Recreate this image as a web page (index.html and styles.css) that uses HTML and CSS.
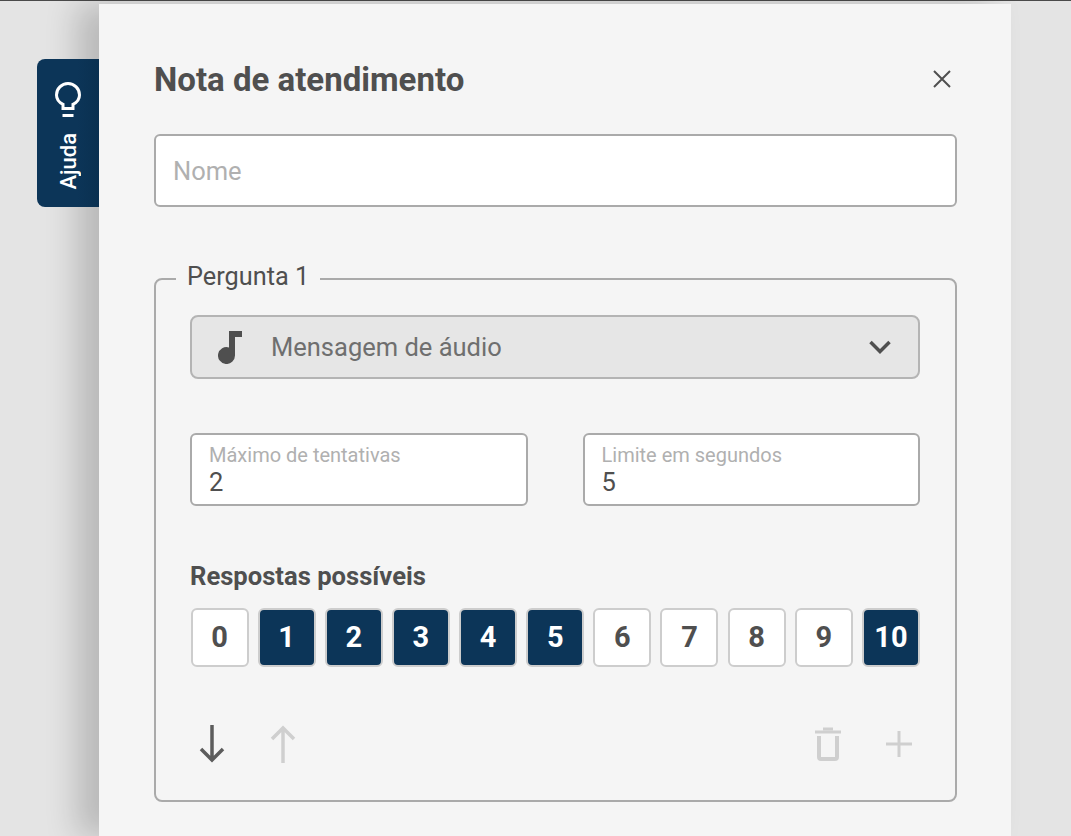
FILE: index.html
```html
<!DOCTYPE html>
<html lang="pt-BR">
<head>
  <meta charset="UTF-8" />
  <title>Nota de atendimento</title>
  <link rel="stylesheet" href="styles.css">
</head>
<body>
  <div class="top-line"></div>
  <div class="panel">
    <div class="help-tab">
      <svg width="28" height="36" viewBox="0 0 28 36" fill="none" stroke="#fff" stroke-width="3">
        <path d="M9 27.5v-4.2C5 21.300 2.500 17.800 2.500 14a11.500 11.500 0 0 1 23 0c0 3.800-2.500 7.300-6.500 9.300v4.200z"/>
        <path d="M8.500 34.500h11"/>
      </svg>
      <span class="help-text">Ajuda</span>
    </div>

    <div class="panel-header">
      <h1>Nota de atendimento</h1>
      <svg class="close-icon" width="18" height="18" viewBox="0 0 18 18" stroke="#4f4f4f" stroke-width="2">
        <path d="M1 1l16 16M17 1L1 17"/>
      </svg>
    </div>

    <div class="name-input">Nome</div>

    <fieldset class="question">
      <legend>Pergunta 1</legend>

      <div class="select-box">
        <svg width="24" height="33" viewBox="0 0 24 33" fill="#4f4f4f">
          <path d="M11 0H24V6H17V24.500A8.500 8.500 0 1 1 11 16.400z"/>
        </svg>
        <span class="select-text">Mensagem de áudio</span>
        <svg width="22" height="14" viewBox="0 0 22 14" fill="none" stroke="#4f4f4f" stroke-width="3.500">
          <path d="M1.500 2l9.500 9.500L20.500 2"/>
        </svg>
      </div>

      <div class="fields">
        <div class="field">
          <label>Máximo de tentativas</label>
          <div class="value">2</div>
        </div>
        <div class="field">
          <label>Limite em segundos</label>
          <div class="value">5</div>
        </div>
      </div>

      <h3>Respostas possíveis</h3>
      <div class="answers">
        <div class="answer">0</div>
        <div class="answer on">1</div>
        <div class="answer on">2</div>
        <div class="answer on">3</div>
        <div class="answer on">4</div>
        <div class="answer on">5</div>
        <div class="answer">6</div>
        <div class="answer">7</div>
        <div class="answer">8</div>
        <div class="answer">9</div>
        <div class="answer on">10</div>
      </div>

      <div class="actions">
        <div class="action-group">
          <svg width="26" height="38" viewBox="0 0 26 38" fill="none" stroke="#5c5c5c" stroke-width="3.500">
            <path d="M13 0v35M2 24l11 11 11-11"/>
          </svg>
          <svg width="26" height="38" viewBox="0 0 26 38" fill="none" stroke="#cfcfcf" stroke-width="3.500">
            <path d="M13 38V3M2 14L13 3l11 11"/>
          </svg>
        </div>
        <div class="action-group">
          <svg width="26" height="34" viewBox="0 0 26 34" fill="none" stroke="#cfcfcf" stroke-width="4">
            <path d="M0 5h26" stroke-width="3"/>
            <path d="M8 2h10" stroke-width="3"/>
            <path d="M4 9v21a2 2 0 0 0 2 2h14a2 2 0 0 0 2-2V9"/>
          </svg>
          <svg width="26" height="26" viewBox="0 0 26 26" fill="none" stroke="#cfcfcf" stroke-width="3">
            <path d="M13 0v26M0 13h26"/>
          </svg>
        </div>
      </div>
    </fieldset>
  </div>
</body>
</html>
```

FILE: styles.css
```css
html, body { margin: 0; height: 836px; overflow: hidden; }
body { font-family: Roboto, "Liberation Sans", sans-serif; background: #e4e4e4; color: #4f4f4f; }
.top-line { height: 1px; background: #4a4a4a; margin-bottom: 3px; }

.panel {
  position: relative;
  box-sizing: border-box;
  width: 912px;
  height: 832px;
  margin-left: 99px;
  padding: 0 54px 0 55px;
  background: #f5f5f5;
  box-shadow: -22px 0 30px rgba(0, 0, 0, 0.19);
}

.help-tab {
  position: absolute;
  left: -62px;
  top: 55px;
  box-sizing: border-box;
  width: 62px;
  height: 148px;
  padding-top: 22px;
  display: flex;
  flex-direction: column;
  align-items: center;
  background: linear-gradient(to right, #0c3558 65%, #0a3050);
  border-radius: 8px 0 0 8px;
}
.help-text {
  margin-top: 16px;
  writing-mode: vertical-rl;
  transform: rotate(180deg);
  color: #fff;
  font-size: 22px;
  font-weight: 500;
}

.panel-header {
  box-sizing: border-box;
  display: flex;
  justify-content: space-between;
  align-items: flex-start;
  height: 130px;
  padding: 56px 6px 0 0;
}
.panel-header h1 { margin: 0; font-size: 33px; line-height: 40px; font-weight: 700; color: #4f4f4f; }
.close-icon { margin-top: 10px; }

.name-input {
  box-sizing: border-box;
  height: 73px;
  padding-left: 17px;
  line-height: 71px;
  font-size: 25.5px;
  color: #b0b0b0;
  background: #fff;
  border: 2px solid #aaa;
  border-radius: 6px;
}

.question {
  box-sizing: border-box;
  height: 539px;
  margin: 56px 0 0;
  padding: 20px 35px 0 34px;
  border: 2px solid #aaa;
  border-radius: 8px;
}
.question legend {
  margin-left: -14px;
  padding: 0 11px 4px;
  font-size: 25.3px;
  line-height: 28px;
}

.select-box {
  box-sizing: border-box;
  display: flex;
  align-items: center;
  height: 64px;
  padding: 0 27px 0 26px;
  background: #e6e6e6;
  border: 2px solid #b4b4b4;
  border-radius: 8px;
}
.select-text { flex: 1; margin-left: 29px; font-size: 25.5px; color: #6f6f6f; }

.fields { display: flex; justify-content: space-between; margin-top: 54px; }
.field {
  box-sizing: border-box;
  width: 337.5px;
  height: 73px;
  padding: 9px 17px 0;
  background: #fff;
  border: 2px solid #aaa;
  border-radius: 6px;
}
.field label { display: block; font-size: 20px; line-height: 22px; color: #b0b0b0; }
.field .value { font-size: 25.5px; line-height: 28px; margin-top: 2px; }

.question h3 { margin: 54px 0 0; font-size: 25.6px; line-height: 32px; font-weight: 700; }

.answers { display: flex; justify-content: space-between; margin-top: 16px; padding-left: 0.5px; }
.answer {
  box-sizing: border-box;
  width: 58px;
  height: 59px;
  line-height: 55px;
  text-align: center;
  font-size: 29px;
  font-weight: 700;
  background: #fff;
  border: 2px solid #cdcdcd;
  border-radius: 6px;
}
.answer.on { background: #0c3558; color: #fff; }

.actions { display: flex; justify-content: space-between; align-items: center; margin-top: 58px; padding: 0 8px 0 9px; }
.action-group { display: flex; gap: 45px; align-items: center; }
```
